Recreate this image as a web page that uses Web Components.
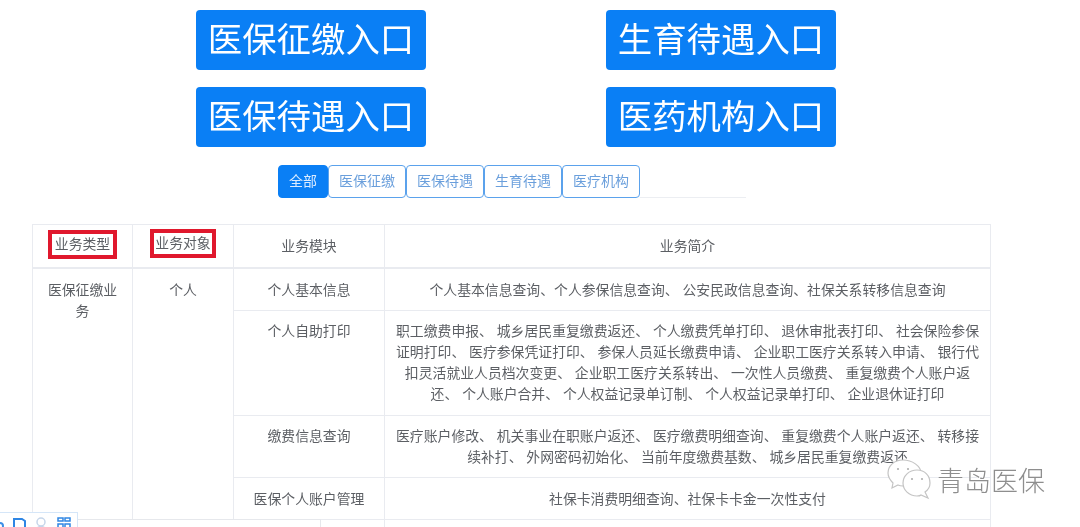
<!DOCTYPE html>
<html lang="zh">
<head>
<meta charset="utf-8">
<title>青岛医保</title>
<style>
  html, body { margin: 0; height: 527px; overflow: hidden; background: #fff; }
  body { font-family: "Liberation Sans", "Noto Sans CJK SC", sans-serif; color: #606266; }
</style>
</head>
<body>

<service-page>
  <entry-grid>
    <entry-button>医保征缴入口</entry-button>
    <entry-button>生育待遇入口</entry-button>
    <entry-button>医保待遇入口</entry-button>
    <entry-button>医药机构入口</entry-button>
  </entry-grid>
  <tab-bar>
    <tab-item active>全部</tab-item>
    <tab-item>医保征缴</tab-item>
    <tab-item>医保待遇</tab-item>
    <tab-item>生育待遇</tab-item>
    <tab-item>医疗机构</tab-item>
  </tab-bar>
  <business-table></business-table>
</service-page>
<float-toolbar></float-toolbar>
<wechat-mark>青岛医保</wechat-mark>

<script>
/**
 * Outer column of the page. The source is a scaled screenshot, hence the soft blur.
 */
class ServicePage extends HTMLElement {
  constructor() {
    super()
    this.attachShadow({ mode: 'open' }).innerHTML = `
      <style>
        :host { display: block; padding-top: 10px; filter: blur(0.35px); }
      </style>
      <slot></slot>`
  }
}

/**
 * The four big entrance buttons.
 */
class EntryGrid extends HTMLElement {
  constructor() {
    super()
    this.attachShadow({ mode: 'open' }).innerHTML = `
      <style>
        :host {
          display: grid;
          grid-template-columns: 230px 230px;
          column-gap: 180px;
          row-gap: 17px;
          padding-left: 196px;
        }
      </style>
      <slot></slot>`
  }
}

class EntryButton extends HTMLElement {
  constructor() {
    super()
    this.attachShadow({ mode: 'open' }).innerHTML = `
      <style>
        :host {
          box-sizing: border-box;
          display: flex;
          align-items: center;
          justify-content: center;
          height: 60px;
          padding-bottom: 7px;
          background: #0a7ff5;
          border-radius: 4px;
          color: #fff;
          font-size: 34.4px;
          white-space: nowrap;
        }
      </style>
      <slot></slot>`
  }
}

/**
 * Filter tabs, with the faint rule that runs on to their right.
 */
class TabBar extends HTMLElement {
  constructor() {
    super()
    this.attachShadow({ mode: 'open' }).innerHTML = `
      <style>
        :host {
          display: flex;
          height: 33px;
          margin-top: 18px;
          padding-left: 278px;
        }
        .rule {
          width: 106px;
          border-bottom: 1px solid #eceef2;
        }
      </style>
      <slot></slot>
      <div class="rule"></div>`
  }
}

class TabItem extends HTMLElement {
  constructor() {
    super()
    this.attachShadow({ mode: 'open' }).innerHTML = `
      <style>
        :host {
          box-sizing: border-box;
          display: flex;
          align-items: center;
          justify-content: center;
          width: 78px;
          height: 33px;
          padding-bottom: 3px;
          background: #fff;
          border: 1px solid #5ba2ec;
          border-radius: 4px;
          color: #6a9fdc;
          font-size: 14px;
        }
        :host([active]) {
          width: 50px;
          background: #0a7ff5;
          border-color: #0a7ff5;
          color: #dcecff;
        }
      </style>
      <slot></slot>`
  }
}

/**
 * Marks a header label with a hand drawn red frame.
 */
class RedFrame extends HTMLElement {
  constructor() {
    super()
    this.attachShadow({ mode: 'open' }).innerHTML = `
      <style>
        :host {
          display: inline-block;
          padding: 0 3px;
          border: 4px solid #e0182d;
          line-height: 21px;
        }
        :host([tight]) {
          padding: 0 1px;
          margin-top: -1px;
        }
      </style>
      <slot></slot>`
  }
}

/**
 * The table of business types.
 */
class BusinessTable extends HTMLElement {
  constructor() {
    super()
    const rows = [
      ['个人基本信息', 43, '个人基本信息查询、个人参保信息查询、 公安民政信息查询、社保关系转移信息查询'],
      ['个人自助打印', 105, '职工缴费申报、 城乡居民重复缴费返还、 个人缴费凭单打印、 退休审批表打印、 社会保险参保证明打印、 医疗参保凭证打印、 参保人员延长缴费申请、 企业职工医疗关系转入申请、 银行代扣灵活就业人员档次变更、 企业职工医疗关系转出、 一次性人员缴费、 重复缴费个人账户返还、 个人账户合并、 个人权益记录单订制、 个人权益记录单打印、 企业退休证打印'],
      ['缴费信息查询', 62, '医疗账户修改、 机关事业在职账户返还、 医疗缴费明细查询、 重复缴费个人账户返还、 转移接续补打、 外网密码初始化、 当前年度缴费基数、 城乡居民重复缴费返还'],
      ['医保个人账户管理', 42, '社保卡消费明细查询、社保卡卡金一次性支付']
    ]
    const body = rows.map((row, i) => `
      <tr class="${i === 1 || i === 2 ? 'snug' : ''}" style="height:${row[1]}px">
        ${i === 0 ? `<td rowspan="5">医保征缴业务</td><td rowspan="5">个人</td>` : ''}
        <td>${row[0]}</td>
        <td>${row[2]}</td>
      </tr>`).join('')

    this.attachShadow({ mode: 'open' }).innerHTML = `
      <style>
        :host { display: block; margin: 26px 0 0 32px; width: 958px; }
        table {
          table-layout: fixed;
          width: 958px;
          border-collapse: collapse;
          font-size: 13.85px;
          line-height: 21px;
          color: #5c5f64;
          text-align: center;
        }
        th, td {
          box-sizing: border-box;
          padding: 11px 10px 0;
          border: 1px solid #e9ebf0;
          vertical-align: top;
          font-weight: normal;
        }
        tr.snug td { padding-top: 10px; }
        th { height: 43px; border-bottom-width: 2px; }
        th.framed { padding-top: 5px; padding-left: 0; padding-right: 0; }
        .empty { height: 30px; }
      </style>
      <table>
        <colgroup>
          <col style="width:100px"><col style="width:101px">
          <col style="width:151px"><col style="width:606px">
        </colgroup>
        <thead>
          <tr>
            <th class="framed"><red-frame>业务类型</red-frame></th>
            <th class="framed"><red-frame tight>业务对象</red-frame></th>
            <th>业务模块</th>
            <th>业务简介</th>
          </tr>
        </thead>
        <tbody>
          ${body}
          <tr class="empty"><td></td><td></td></tr>
        </tbody>
      </table>`
  }
}

/**
 * Strip of a floating panel, cut off at the bottom left of the shot.
 */
class FloatToolbar extends HTMLElement {
  constructor() {
    super()
    this.attachShadow({ mode: 'open' }).innerHTML = `
      <style>
        :host {
          position: fixed;
          left: 0;
          bottom: 0;
          width: 320px;
          height: 7px;
          background: #fff;
          border-top: 1px solid #e6e8ec;
          border-right: 1px solid #e6e8ec;
        }
        .tools {
          position: absolute;
          left: 0;
          bottom: 0;
          width: 77px;
          height: 14px;
          background: #fff;
          border-top: 1px solid #d5e6f8;
          border-right: 1px solid #d5e6f8;
        }
        svg { display: block; }
      </style>
      <div class="tools">
        <svg width="77" height="14" viewBox="0 0 77 14">
          <circle cx="0" cy="13" r="3" fill="none" stroke="#3d8fe6" stroke-width="2"/>
          <path d="M14 14V6h8l3 2v6" fill="none" stroke="#2f86e4" stroke-width="2"/>
          <circle cx="41" cy="9" r="4" fill="none" stroke="#c6d6ea" stroke-width="1.5"/>
          <path d="M37 15q4-3 8 0" fill="none" stroke="#c6d6ea" stroke-width="1.5"/>
          <path d="M58 5h5v3h-5zM65 5h5v3h-5zM58 11h5v4h-5zM65 11h5v4h-5z" fill="none" stroke="#2f86e4" stroke-width="1.5"/>
        </svg>
      </div>`
  }
}

/**
 * WeChat account watermark, lies over the table.
 */
class WechatMark extends HTMLElement {
  constructor() {
    super()
    this.attachShadow({ mode: 'open' }).innerHTML = `
      <style>
        :host {
          position: fixed;
          left: 886px;
          top: 458px;
          display: flex;
          align-items: center;
          gap: 3px;
          height: 42px;
          color: #8e8e8e;
          font-size: 27px;
          font-weight: 300;
          white-space: nowrap;
          text-shadow: 0 0 1px #fff, 0 0 2px #fff;
          filter: blur(0.3px);
        }
        svg { display: block; }
      </style>
      <svg width="48" height="42" viewBox="0 0 48 42" fill="#fff" stroke="#c4c4c4" stroke-width="1.2">
        <path d="M17 2C8 2 2 8 2 15c0 4 2 7 5 10l-1 5 6-3c2 1 4 1 5 1 6 0 10-1 13-4 3-3 5-6 5-9C35 8 26 2 17 2z"/>
        <path d="M31 12c-8 0-14 6-14 13s6 13 14 13c2 0 3 0 4-1l7 3-3-6c3-2 5-5 5-9 0-7-5-13-13-13z"/>
        <circle cx="12" cy="11" r="1.1" fill="#b0b0b0" stroke="none"/>
        <circle cx="22" cy="11" r="1.1" fill="#b0b0b0" stroke="none"/>
        <circle cx="26" cy="21" r="1.1" fill="#b0b0b0" stroke="none"/>
        <circle cx="36" cy="21" r="1.1" fill="#b0b0b0" stroke="none"/>
      </svg>
      <slot></slot>`
  }
}

customElements.define('service-page', ServicePage)
customElements.define('entry-grid', EntryGrid)
customElements.define('entry-button', EntryButton)
customElements.define('tab-bar', TabBar)
customElements.define('tab-item', TabItem)
customElements.define('red-frame', RedFrame)
customElements.define('business-table', BusinessTable)
customElements.define('float-toolbar', FloatToolbar)
customElements.define('wechat-mark', WechatMark)
</script>
</body>
</html>
